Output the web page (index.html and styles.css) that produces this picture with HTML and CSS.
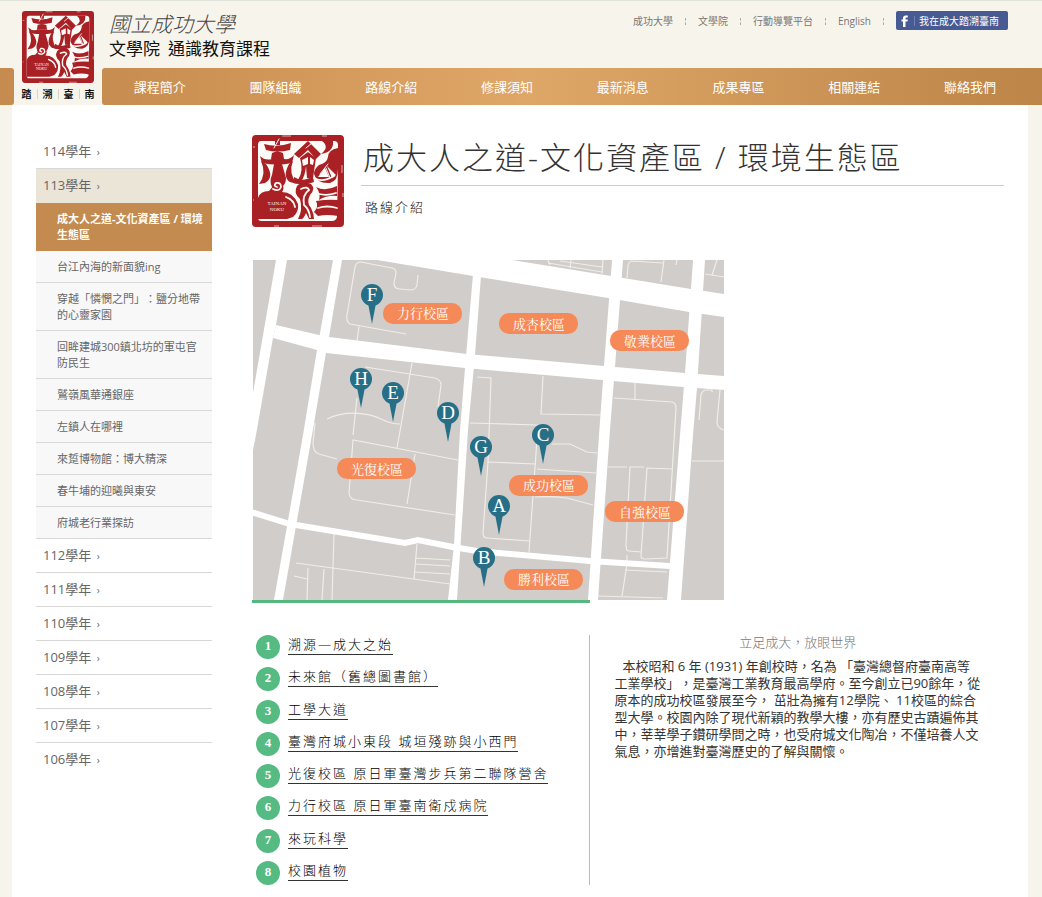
FILE: index.html
```html
<!DOCTYPE html>
<html lang="zh-Hant">
<head>
<meta charset="utf-8">
<meta name="viewport" content="width=device-width, initial-scale=1">
<title>成大人之道-文化資產區 / 環境生態區</title>
<link rel="stylesheet" href="styles.css">
</head>
<body>
<svg class="defs" aria-hidden="true">
  <symbol id="seal" viewBox="0 0 92 92">
    <rect width="92" height="92" rx="4" fill="#a92025"/>
    <path fill="#fdfbf7" d="M9 6H82Q86 6 86 10V34L85 82Q84 86 80 86H9Q6 86 6 82V10Q6 6 9 6Z"/>
    <g fill="#a92025">
      <path d="M12 9Q25 13 39 8L38 15Q25 18 14 15ZM23 5h5v5h-5zM20 18Q25 15 31 18L32 24H19Z"/>
      <path d="M8 21Q13 26 20 24H32Q38 25 42 20L40 28Q25 31 10 28Z"/>
      <path d="M22 29H30L34 43Q34 49 30 52H20Q17 46 20 40Z"/>
      <path d="M9 26L14 29Q23 42 13 48L7 49Q15 39 9 26ZM41 26L37 29Q30 42 38 47L45 49Q36 38 41 26Z"/>
      <path d="M6 63Q8 56 17 56Q21 52 21 49H30Q33 53 30 57Q41 57 46 69Q47 77 41 82L35 84H6Z"/>
      <path d="M42 19L56 6L69 19L64 24L56 15L47 23Z"/>
      <path d="M48 23L56 17L64 23L61 43H55L54 31Q53 42 49 46L46 45Q52 36 48 23Z"/>
      <path d="M42 42Q51 48 61 41L62 47Q52 51 42 48Z"/>
      <path d="M70 6Q78 12 69 19Q82 17 81 6Z"/>
      <path d="M86 13Q76 15 76 22Q75 28 67 30Q62 34 62 39Q65 49 78 48Q86 46 86 34Z"/>
      <path d="M45 51Q50 45 59 49Q64 54 58 60Q54 68 59 73Q62 79 62 84H57L54 78Q52 83 50 84H46Q51 75 48 64Q41 58 45 51Z"/>
      <path d="M64 52Q73 57 85 51V61Q75 60 67 65Q69 58 64 52ZM64 66Q76 64 86 65V81Q75 79 66 81L62 77Q67 72 64 66Z"/>
    </g>
    <g fill="#fdfbf7">
      <path d="M50 25L56 22V29L51 31ZM58 22L62 25L61 30L58 29Z"/>
      <path d="M73 33L77 42H66ZM75 31L84 40L80 43Z"/>
    </g>
    <g fill="none" stroke="#fdfbf7" stroke-width="1.8" stroke-linecap="round">
      <path d="M21 54Q27 57 29 52Q29 47 24 48Q21 51 25 52M34 62Q42 65 43 72"/>
      <path d="M62 43Q70 48 82 41M49 54Q56 51 57 55Q50 60 52 70Q57 74 58 82M67 59Q75 61 84 58M66 73Q75 70 85 73"/>
      <path stroke-width="1" d="M68 39L76 29M74 33L78 43M27 4L22 13M60 8L54 13"/>
    </g>
    <path d="M1 12h2M1 65h1M22 91h5M60 91h10M90 30v8M91 58v4M30 1h9M70 1h5" stroke="#fdfbf7" opacity=".65"/>
  </symbol>
  <symbol id="pin" viewBox="-11 -11 22 41" overflow="visible">
    <path d="M-4 8L0 29L4 8Z" fill="#276f86"/><circle r="11" fill="#276f86"/>
  </symbol>
</svg>

<header class="site-header">
  <span class="stub"></span>
  <a class="logo" href="#" aria-label="踏溯臺南">
    <svg class="logo-seal" viewBox="0 0 92 92"><use href="#seal"/><g class="seal-text" text-anchor="middle"><text x="25" y="70">TAINAN</text><text x="25" y="76">NOKU</text></g></svg>
    <span class="logo-name"><span>踏</span><span>溯</span><span>臺</span><span>南</span></span>
  </a>
  <div class="topbar">
    <div class="brand">
      <span class="brand-main">國立成功大學</span>
      <span class="brand-sub"><span>文學院</span><span>通識教育課程</span></span>
    </div>
    <nav class="top-links" aria-label="相關網站">
      <a href="#">成功大學</a><a href="#">文學院</a><a href="#">行動導覽平台</a><a href="#">English</a>
      <a class="fb" href="#"><svg viewBox="0 0 8 12"><path fill="#fff" d="M2 12V6.600H.5V4.400H2V3Q2 .5 4.800 .5H6.800V2.600H5.500Q4.500 2.600 4.500 3.500V4.400H6.800L6.500 6.600H4.500V12Z"/></svg><span>我在成大踏溯臺南</span></a>
    </nav>
  </div>
  <nav class="main-nav" aria-label="主選單">
    <a href="#">課程簡介</a><a href="#">團隊組織</a><a href="#">路線介紹</a><a href="#">修課須知</a><a href="#">最新消息</a><a href="#">成果專區</a><a href="#">相關連結</a><a href="#">聯絡我們</a>
  </nav>
</header>

<div class="page">
  <aside class="side">
    <ul class="years">
      <li><a class="year" href="#">114學年 <i>›</i></a></li>
      <li class="open"><a class="year" href="#">113學年 <i>›</i></a>
        <ul class="routes">
          <li class="current"><a href="#">成大人之道-文化資產區 / 環境生態區</a></li>
          <li><a href="#">台江內海的新面貌ing</a></li>
          <li><a href="#">穿越「憐憫之門」：鹽分地帶的心靈家園</a></li>
          <li><a href="#">回眸建城300鎮北坊的軍屯官防民生</a></li>
          <li><a href="#">鷲嶺風華通銀座</a></li>
          <li><a href="#">左鎮人在哪裡</a></li>
          <li><a href="#">來踅博物館：博大精深</a></li>
          <li><a href="#">春牛埔的迎曦與東安</a></li>
          <li><a href="#">府城老行業探訪</a></li>
        </ul>
      </li>
      <li><a class="year" href="#">112學年 <i>›</i></a></li>
      <li><a class="year" href="#">111學年 <i>›</i></a></li>
      <li><a class="year" href="#">110學年 <i>›</i></a></li>
      <li><a class="year" href="#">109學年 <i>›</i></a></li>
      <li><a class="year" href="#">108學年 <i>›</i></a></li>
      <li><a class="year" href="#">107學年 <i>›</i></a></li>
      <li><a class="year" href="#">106學年 <i>›</i></a></li>
    </ul>
  </aside>

  <main class="content">
    <div class="heading">
      <svg class="heading-seal" viewBox="0 0 92 92" aria-hidden="true"><use href="#seal"/><g class="seal-text" text-anchor="middle"><text x="25" y="70">TAINAN</text><text x="25" y="76">NOKU</text></g></svg>
      <div class="heading-text">
        <h1>成大人之道-文化資產區 / 環境生態區</h1>
        <p>路線介紹</p>
      </div>
    </div>

    <svg class="map" viewBox="0 0 471 340" role="img" aria-label="校區地圖">
      <rect width="471" height="340" fill="#d0cdca"/>
      <g fill="none" stroke="#f1ede8" stroke-width="1.200">
        <path d="M153 74L97 64Q93 62 94 55L102 7Q103 2 108 2L139 8Q143 9 143 13L141 23Q141 29 147 29L157 30Q163 30 164 25L165 15M106 66L104 81"/>
        <path d="M112 107L182 118Q188 120 188 125L185 147M159 103L144 188M104 138L100 175M74 159C95 149 118 154 128 159Q138 164 147 164"/>
        <path d="M62 163L60 183Q60 192 66 194L84 199M205 200L100 180L96 233Q97 240 104 240L202 255M162 194L154 244"/>
        <path d="M81 274L79 340M43 303L197 324M41 316L54 319M55 308L54 340M71 309L69 340M164 284L161 319M163 298L197 300M163 304L197 306M162 312L197 314"/>
        <path d="M224 117L238 118L235 202M290 116L288 154L348 155M217 163L285 165L276 292M295 0L297 5M307 1L349 7M295 3L349 12M318 0L317 8M350 0L349 14"/>
        <path d="M410 3L379 1Q376 1 375 6L374 18M411 0L408 22M424 0L423 5M464 0L459 15M452 14L471 17"/>
        <path d="M382 122V139M361 138L419 142Q423 143 423 148L414 298L392 299Q388 299 388 296L394 208L419 209"/>
        <path d="M355 207H374M391 207H377L373 285Q373 291 376 291L388 292M374 295V304L369 336M372 310L414 312M345 336L410 338M439 201H471M459 132V130H452Q449 131 448 135L446 160M467 130L464 162Q464 168 471 170"/>
        <path d="M283 204L235 202L230 273Q230 278 234 278L277 281M299 184H317L334 192L344 193M284 209L343 213M282 237Q298 236 314 238L340 245"/>
      </g>
      <g fill="#fff">
        <path d="M23 0H34L23 65L20 78L3 175L0 190V133Z"/>
        <path d="M80 0H89L76 77L73 93L59 175L30 340H21L50 175L64 90Z"/>
        <path d="M23 65L66 75L76 77L214 94L351 106L432 113L471 116V130L430 127L360 121L212 108L73 93L64 90L20 78Z"/>
        <path d="M124 0H259L358 16L438 29L471 34V57L436 52L355 38L220 16Z"/>
        <path d="M220 14L228 16L222 95L215 170L204 340H195L201 285L207 170L212 108Z"/>
        <path d="M359 0H370L362 107L357 170L345 340H335L346 175L351 106Z"/>
        <path d="M440 0H452L444 128L440 175L428 340H414L427 175L432 113Z"/>
      </g>
      <path d="M-2 252L37 264L152 283L165 280L200 287L224 291L337 301L417 306" fill="none" stroke="#fff" stroke-width="6"/>
      <g class="pills" fill="#f58a58">
        <rect x="130" y="43" width="79" height="21" rx="10"/><rect x="246" y="53" width="79" height="21" rx="10"/><rect x="357" y="70" width="79" height="21" rx="10"/><rect x="84" y="198" width="79" height="21" rx="10"/><rect x="256" y="215" width="79" height="21" rx="10"/><rect x="352" y="241" width="79" height="21" rx="10"/><rect x="251" y="309" width="79" height="21" rx="10"/>
      </g>
      <g class="zone" text-anchor="middle">
        <text x="170" y="58">力行校區</text><text x="286" y="69">成杏校區</text><text x="397" y="86">敬業校區</text><text x="124" y="214">光復校區</text><text x="296" y="230">成功校區</text><text x="392" y="257">自強校區</text><text x="291" y="324">勝利校區</text>
      </g>
      <g>
        <use href="#pin" x="108" y="24" width="22" height="41"/><use href="#pin" x="97" y="108" width="22" height="41"/><use href="#pin" x="129" y="122" width="22" height="41"/><use href="#pin" x="184" y="142" width="22" height="41"/><use href="#pin" x="217" y="176" width="22" height="41"/><use href="#pin" x="279" y="164" width="22" height="41"/><use href="#pin" x="235" y="235" width="22" height="41"/><use href="#pin" x="220" y="287" width="22" height="41"/>
      </g>
      <g class="pin-letter" text-anchor="middle">
        <text x="119" y="41">F</text><text x="108" y="125">H</text><text x="140" y="139">E</text><text x="195" y="159">D</text><text x="228" y="193">G</text><text x="290" y="181">C</text><text x="246" y="252">A</text><text x="231" y="304">B</text>
      </g>
    </svg>
    <div class="map-rule"></div>

    <div class="columns">
      <ol class="stops">
        <li><b>1</b><a href="#">溯源—成大之始</a></li>
        <li><b>2</b><a href="#">未來館（舊總圖書館）</a></li>
        <li><b>3</b><a href="#">工學大道</a></li>
        <li><b>4</b><a href="#">臺灣府城小東段 城垣殘跡與小西門</a></li>
        <li><b>5</b><a href="#">光復校區 原日軍臺灣步兵第二聯隊營舍</a></li>
        <li><b>6</b><a href="#">力行校區 原日軍臺南衛戍病院</a></li>
        <li><b>7</b><a href="#">來玩科學</a></li>
        <li><b>8</b><a href="#">校園植物</a></li>
      </ol>
      <section class="intro">
        <h2>立足成大，放眼世界</h2>
        <p>本校昭和 6 年 (1931) 年創校時，名為 「臺灣總督府臺南高等工業學校」，是臺灣工業教育最高學府。至今創立已90餘年，從原本的成功校區發展至今， 茁壯為擁有12學院、 11校區的綜合型大學。校園內除了現代新穎的教學大樓，亦有歷史古蹟遍佈其中，莘莘學子鑽研學問之時，也受府城文化陶冶，不僅培養人文氣息，亦增進對臺灣歷史的了解與關懷。</p>
      </section>
    </div>
  </main>
</div>
</body>
</html>
```

FILE: styles.css
```css
* { box-sizing: border-box; }

body {
  margin: 0;
  background: #f7f4ec;
  color: #333;
  font-family: "Open Sans", "Noto Sans CJK TC", sans-serif;
  font-size: 13px;
  text-spacing-trim: space-all;
}

a { color: inherit; text-decoration: none; }
ul, ol { list-style: none; margin: 0; padding: 0; }
h1, h2, p { margin: 0; font-weight: 300; }
.defs { display: block; width: 0; height: 0; }

.seal-text {
  fill: #fdfbf7;
  font-family: "Liberation Serif", serif;
  font-size: 5px;
}

/* Header */
.site-header {
  display: grid;
  grid-template-columns: 14px 88px 1fr;
  grid-template-rows: 67px 37px;
  border-top: 1px solid #dfe3da;
}

.stub {
  grid-area: 2 / 1;
  background: #c68b4e;
  border-radius: 0 3px 3px 0;
}

.logo {
  grid-area: 1 / 2 / 3 / 3;
  display: flex;
  flex-direction: column;
  align-items: center;
  padding-top: 10px;
}

.logo-seal { width: 72px; height: 72px; }

.logo-name {
  display: flex;
  align-items: center;
  margin-top: 3px;
  color: #111;
  font-size: 10px;
  font-weight: 700;
  line-height: 16px;
}

.logo-name span { padding: 0 5px; }
.logo-name span + span { border-left: 1px solid #d8d4cc; line-height: 10px; }

.topbar {
  grid-area: 1 / 3;
  display: flex;
  justify-content: space-between;
  padding: 0 34px 0 7px;
}

.brand { display: flex; flex-direction: column; padding-top: 8px; }

.brand-main {
  color: #444;
  font-size: 21px;
  font-style: italic;
  font-weight: 300;
  line-height: 30px;
}

.brand-sub {
  display: flex;
  gap: 8px;
  color: #111;
  font-size: 17px;
  line-height: 20px;
}

.top-links {
  display: flex;
  align-items: flex-start;
  padding-top: 10px;
  color: #777;
  font-size: 10px;
  line-height: 20px;
}

.top-links a:not(.fb) { display: flex; align-items: center; }

.top-links a:not(.fb)::after {
  content: "";
  height: 7px;
  margin: 0 12px;
  border-left: 1px dashed #aaa;
}

.top-links .fb {
  display: flex;
  align-items: center;
  gap: 5px;
  height: 19px;
  padding: 0 9px 0 5px;
  border-radius: 2px;
  background: #475a94;
  color: #fff;
}

.fb svg { width: 8px; height: 12px; }
.fb span { padding-left: 4px; border-left: 1px solid #7180ad; line-height: 10px; }

.main-nav {
  grid-area: 2 / 3;
  display: flex;
  align-items: center;
  padding: 2px 14px 0 0;
  border-radius: 3px 0 0 3px;
  background: linear-gradient(90deg, #c78c4f, #dfa767 45%, #c1894c 92%, #be8549);
  color: #fff;
}

.main-nav a { flex: 1; text-align: center; line-height: 35px; }

/* Page */
.page {
  display: flex;
  gap: 40px;
  min-height: 792px;
  margin: 0 14px 0 12px;
  padding: 30px 24px 12px;
  background: #fff;
}

.side { flex: 0 0 176px; color: #666; }

.year {
  display: block;
  padding: 0 7px;
  border-bottom: 1px solid #d8d8d8;
  line-height: 33px;
}

.years > li:last-child .year { border-bottom: 0; }
.year i { margin-left: 2px; font-style: normal; font-size: 10px; line-height: 10px; }
.open .year { border-color: #ebe5d8; background: #ebe5d8; }

.routes { font-size: 11px; line-height: 16px; }

.routes li {
  padding: 8px 8px 7px 21px;
  border-bottom: 1px solid #d8d8d8;
  background: #f8f8f8;
}

.routes .current {
  border-color: #c38b4f;
  background: #c38b4f;
  color: #fff;
  font-weight: 700;
}

.content { flex: 1; min-width: 0; }

.heading { display: flex; gap: 17px; margin-bottom: 32px; }
.heading-seal { flex: none; width: 92px; height: 92px; }
.heading-text { flex: 1; }

.heading h1 {
  padding: 0 0 6px 2px;
  border-bottom: 1px solid #ccc;
  font-size: 31px;
  letter-spacing: 2px;
  line-height: 44px;
}

.heading p { padding: 11px 4px; color: #111; letter-spacing: 2px; line-height: 20px; }

.map { display: block; width: 471px; max-width: 100%; margin-left: 1px; }
.zone { fill: #fff; font-family: "Noto Serif CJK TC", "Noto Sans CJK TC", serif; font-size: 13px; }
.pin-letter { fill: #fff; font-family: "Liberation Serif", serif; font-size: 19px; }
.map-rule { width: 45%; height: 3px; background: #56b780; }

.columns { display: flex; padding-top: 32px; }

.stops {
  flex: 0 0 45%;
  display: grid;
  grid-auto-rows: 24px;
  align-content: space-between;
  min-height: 250px;
  padding-left: 4px;
  border-right: 1px solid #bbb;
}

.stops li { display: flex; align-items: flex-start; gap: 8px; }

.stops b {
  width: 24px;
  height: 24px;
  border-radius: 50%;
  background: #56ba83;
  color: #fff;
  font: 700 13px/22px "Liberation Serif", serif;
  text-align: center;
}

.stops a {
  border-bottom: 1px solid #333;
  color: #000;
  font-weight: 300;
  letter-spacing: 2px;
  line-height: 19px;
}

.intro { flex: 1; padding: 0 23px 0 24px; }
.intro h2 { color: #777; font-size: 13px; line-height: 14px; text-align: center; }
.intro p { margin-top: 9px; font-weight: 400; line-height: 17px; text-indent: 8px; }
```
